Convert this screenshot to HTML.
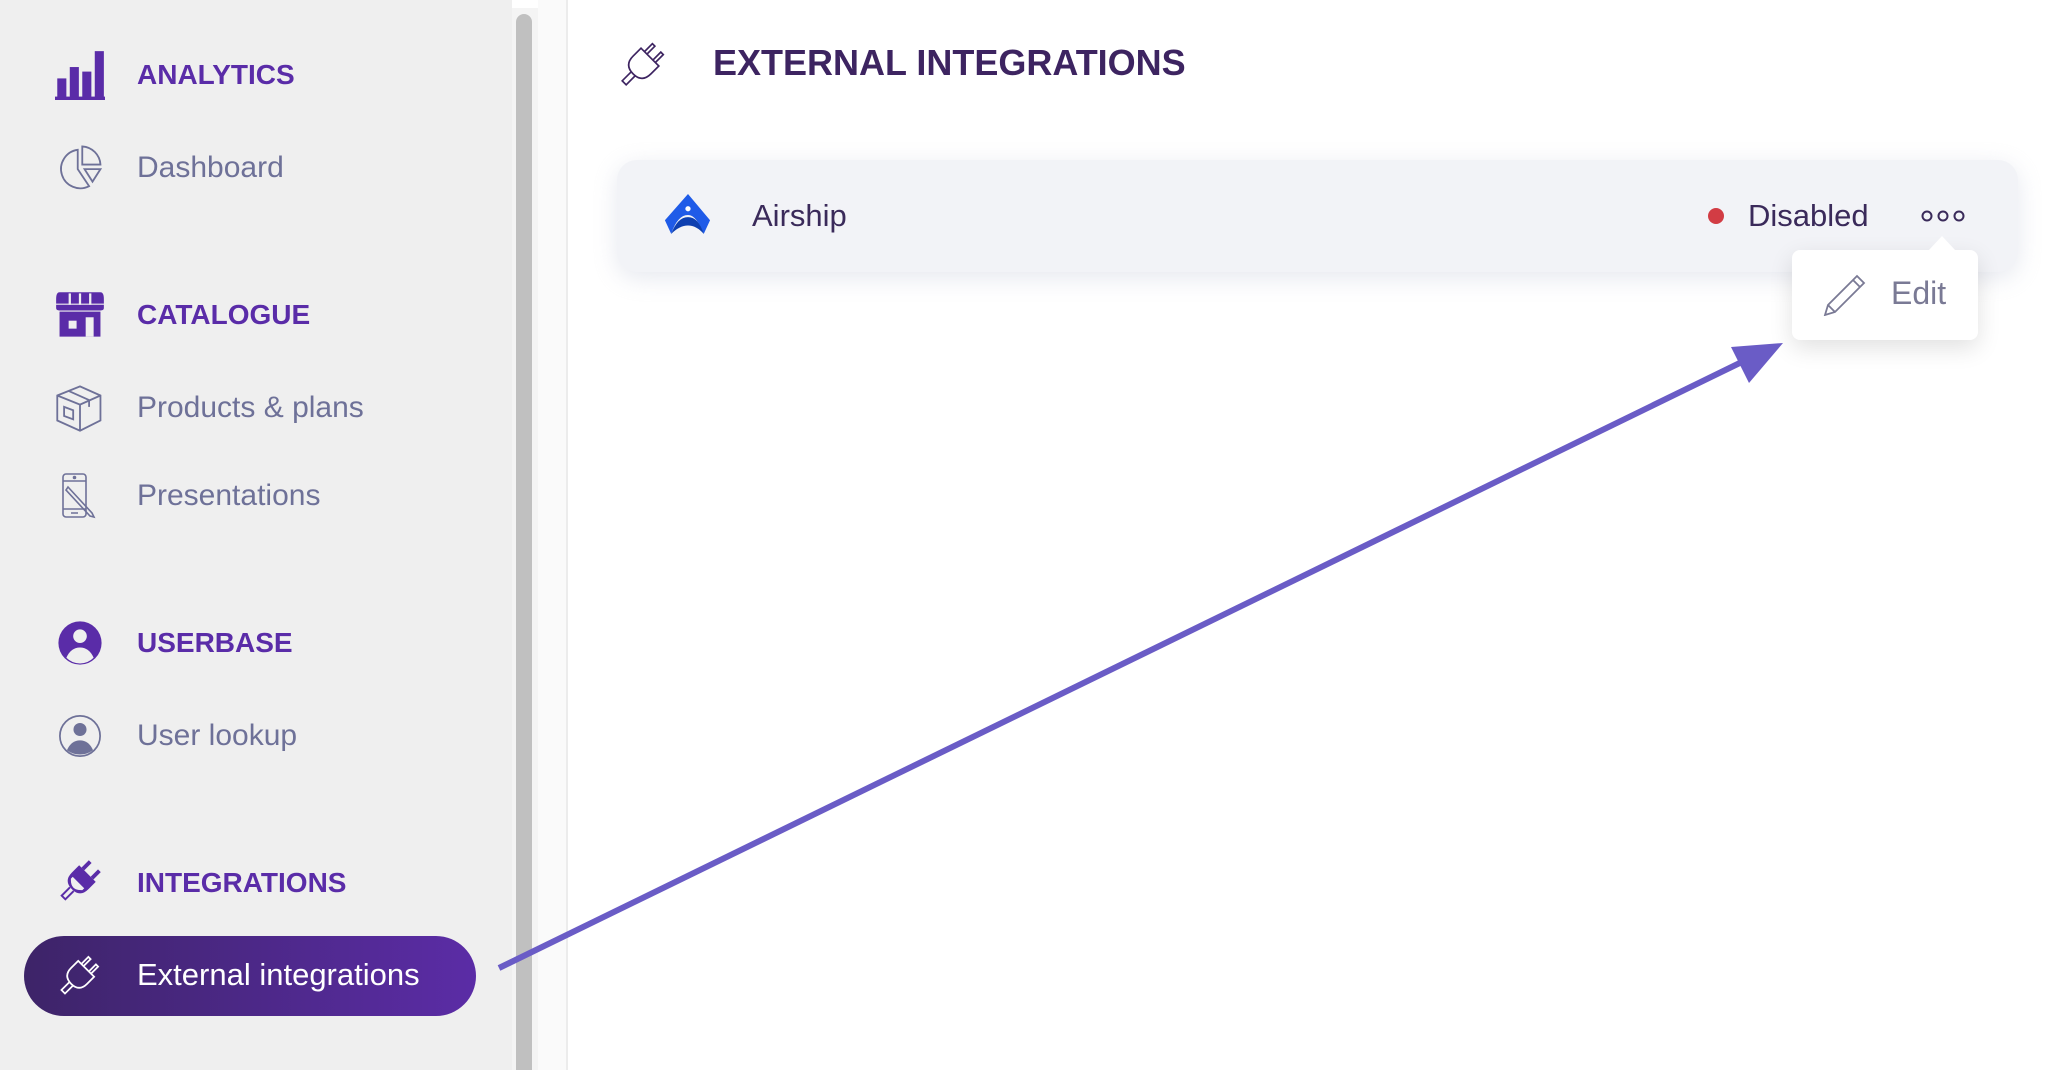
<!DOCTYPE html>
<html><head><meta charset="utf-8">
<style>
*{margin:0;padding:0;box-sizing:border-box}
body{width:2058px;height:1070px;overflow:hidden;background:#fff;font-family:"Liberation Sans",sans-serif;position:relative}
.side{position:absolute;left:0;top:0;width:512px;height:1070px;background:#efefef}
.track{position:absolute;left:512px;top:8px;width:26px;height:1062px;background:#f4f4f4}
.thumb{position:absolute;left:516px;top:14px;width:16px;height:1056px;background:#c0c0c0;border-radius:8px 8px 0 0}
.gap{position:absolute;left:538px;top:0;width:30px;height:1070px;background:#fafafa;border-right:2px solid #ececec}
.it{position:absolute;left:0;height:50px;width:500px}
.it svg{position:absolute;left:55px;top:0}
.it span{position:absolute;left:137px;top:0;line-height:50px;white-space:nowrap;font-size:30px}
.h span{font-weight:bold;color:#5a2ca8;font-size:28px}
.n span{color:#6e7198}
.pill{position:absolute;left:24px;top:936px;width:452px;height:80px;border-radius:40px;background:linear-gradient(90deg,#3d2468,#5b2ca6)}
.card{position:absolute;left:617px;top:160px;width:1401px;height:112px;border-radius:20px;background:#f2f3f7;box-shadow:0 6px 24px rgba(200,205,220,.45)}
.pop{position:absolute;left:1792px;top:250px;width:186px;height:90px;background:#fff;border-radius:8px;box-shadow:0 8px 24px rgba(0,0,0,.12)}
</style></head><body>
<div class="side"></div>
<div class="track"></div><div class="thumb"></div><div class="gap"></div>

<div class="it h" style="top:50px"><svg width="50" height="50" viewBox="0 0 44 44"><g fill="#5a2ca8"><rect x="2" y="25" width="8" height="18"/><rect x="13" y="15" width="8" height="28"/><rect x="24" y="19" width="8" height="24"/><rect x="35" y="1" width="8" height="42"/><rect x="0" y="41" width="44" height="3"/></g></svg><span>ANALYTICS</span></div>

<div class="it n" style="top:143px"><svg width="50" height="50" viewBox="0 0 44 44" fill="none" stroke="#6e7198" stroke-width="1.6"><path d="M20 6 A17 17 0 1 0 30 38 L20 23 Z"/><path d="M24 3 A17 17 0 0 1 40 19 L24 19 Z"/><path d="M26 23 H40 L33 34 Z"/></svg><span>Dashboard</span></div>

<div class="it h" style="top:290px"><svg width="50" height="50" viewBox="0 0 44 44"><path fill="#5a2ca8" d="M4 2 H40 Q43 2 43 8 V12 H1 V8 Q1 2 4 2 Z M1 13 H43 V16 Q43 18 40 18 H4 Q1 18 1 16 Z M4 19 H40 V41 H4 Z"/><g fill="#efefef"><rect x="12" y="3" width="2" height="10"/><rect x="21" y="3" width="2" height="10"/><rect x="30" y="3" width="2" height="10"/><rect x="12" y="27" width="7" height="7"/><rect x="27" y="24" width="7" height="17"/></g></svg><span>CATALOGUE</span></div>

<div class="it n" style="top:383px"><svg width="50" height="50" viewBox="0 0 44 44" fill="none" stroke="#6e7198" stroke-width="1.6"><path d="M2 11 L22 3 L40 11 V33 L22 42 L2 33 Z M2 11 L22 19 L40 11 M22 19 V42 M12 7 L30 15 V21"/><path d="M8 21 L16 24 V32 L8 29 Z"/></svg><span>Products &amp; plans</span></div>

<div class="it n" style="top:471px"><svg width="50" height="50" viewBox="0 0 44 50" fill="none" stroke="#6e7198" stroke-width="1.6"><rect x="5" y="3" width="23" height="43" rx="3"/><path d="M5 10 H28 M5 38 H28 M13 42 H20"/><circle cx="16.5" cy="6.5" r="1" fill="#6e7198"/><path d="M10 16 L34 42 L36 46 L32 45 L8 19 Z"/></svg><span>Presentations</span></div>

<div class="it h" style="top:618px"><svg width="50" height="50" viewBox="0 0 40 44"><circle cx="20" cy="22" r="19" fill="#5a2ca8"/><circle cx="20" cy="16" r="6" fill="#efefef"/><path d="M8 35 Q12 26 20 26 Q28 26 32 35 Q27 40 20 40 Q13 40 8 35 Z" fill="#efefef"/></svg><span>USERBASE</span></div>

<div class="it n" style="top:711px"><svg width="50" height="50" viewBox="0 0 40 46"><circle cx="20" cy="23" r="18.5" fill="none" stroke="#6e7198" stroke-width="1.6"/><circle cx="20" cy="17" r="6" fill="#6e7198"/><path d="M8 36 Q12 27 20 27 Q28 27 32 36 Q27 40 20 40 Q13 40 8 36 Z" fill="#6e7198"/></svg><span>User lookup</span></div>

<div class="it h" style="top:855px"><svg width="52" height="56" viewBox="0 0 40 40" style="top:-3px"><g transform="rotate(45 20 20)"><path d="M11 13 H29 V21 Q29 30 20 30 Q11 30 11 21 Z" fill="#5a2ca8"/><path d="M15 13 V5 M25 13 V5" stroke="#5a2ca8" stroke-width="3"/><path d="M13 22 H27 V25 Q20 33 13 25 Z M18 30 V39 H22 V30" fill="#efefef" stroke="#5a2ca8" stroke-width="1.5"/></g></svg><span style="top:3px">INTEGRATIONS</span></div>

<div class="pill"></div>
<div class="it" style="top:950px"><svg width="50" height="54" viewBox="0 0 40 40" fill="none" stroke="#fff" stroke-width="1.4" style="top:-2px"><g transform="rotate(45 20 20)"><path d="M11 13 H29 V21 Q29 30 20 30 Q11 30 11 21 Z M14.5 13 V5 H17 V13 M23 13 V5 H25.5 V13 M18 30 V39 H22 V30"/></g></svg><span style="color:#fff;font-size:31px">External integrations</span></div>

<!-- header -->
<svg style="position:absolute;left:615px;top:34px" width="56" height="60" viewBox="0 0 40 40" fill="none" stroke="#3d2461" stroke-width="1.2"><g transform="rotate(45 20 20)"><path d="M11 13 H29 V21 Q29 30 20 30 Q11 30 11 21 Z M14.5 13 V5 H17 V13 M23 13 V5 H25.5 V13 M18 30 V39 H22 V30"/></g></svg>
<div style="position:absolute;left:713px;top:42px;font-size:36px;font-weight:bold;color:#3d2461;white-space:nowrap">EXTERNAL INTEGRATIONS</div>

<div class="card"></div>
<svg style="position:absolute;left:659px;top:194px" width="58" height="42" viewBox="0 0 44 40"><path d="M22 0 L43 25 L37 38 Q30 20 22 20 Q12 20 6 38 L0 25 Z" fill="#1f5be8"/><path d="M6 38 Q12 22 22 22 Q32 22 37 38 Q30 30 22 30 Q14 30 6 38 Z" fill="#0d3fb0"/><circle cx="22" cy="14" r="2.5" fill="#fff"/></svg>
<div style="position:absolute;left:752px;top:198px;font-size:31px;color:#3a2a5a">Airship</div>
<div style="position:absolute;left:1708px;top:208px;width:16px;height:16px;border-radius:50%;background:#d23c44"></div>
<div style="position:absolute;left:1748px;top:198px;font-size:31px;color:#3a2a5a">Disabled</div>
<svg style="position:absolute;left:1920px;top:208px" width="46" height="16"><g fill="none" stroke="#3a2a5a" stroke-width="2"><circle cx="7" cy="8" r="4.5"/><circle cx="23" cy="8" r="4.5"/><circle cx="39" cy="8" r="4.5"/></g></svg>

<div class="pop"></div>
<div style="position:absolute;left:1928px;top:236px;width:0;height:0;border-left:14px solid transparent;border-right:14px solid transparent;border-bottom:15px solid #fff"></div>
<svg style="position:absolute;left:1823px;top:274px" width="44" height="42" viewBox="0 0 44 42" fill="none" stroke="#7a7a95" stroke-width="1.8"><path d="M34 2 L41 9 L12 38 L2 41 L5 31 Z M30 6 L37 13 M5 31 L12 38"/></svg>
<div style="position:absolute;left:1891px;top:275px;font-size:32px;color:#7a7a95">Edit</div>

<!-- annotation arrow -->
<svg style="position:absolute;left:0;top:0" width="2058" height="1070"><line x1="499" y1="968" x2="1750" y2="358" stroke="#6a5cc6" stroke-width="6"/><polygon points="1783,343 1731,347 1749,383" fill="#6a5cc6"/></svg>
</body></html>
